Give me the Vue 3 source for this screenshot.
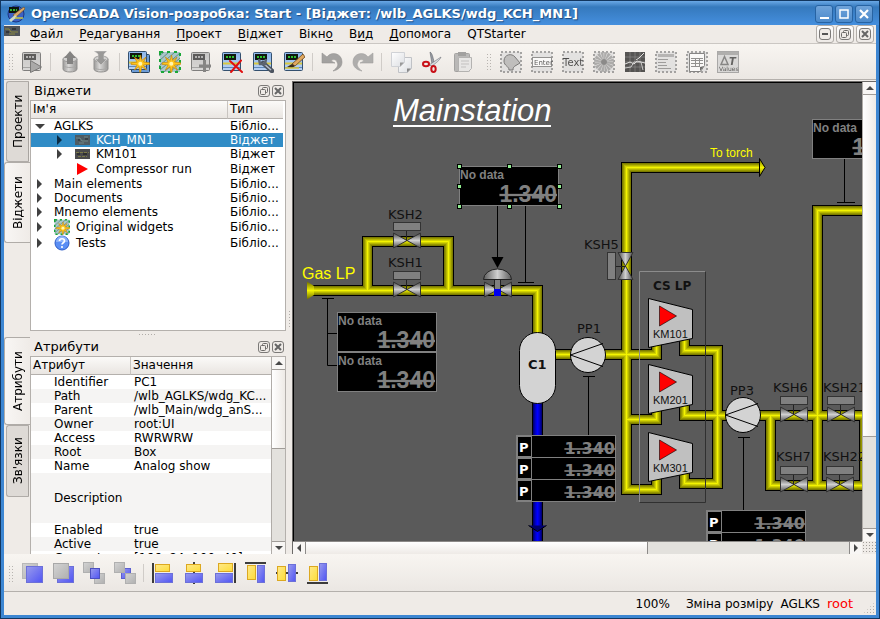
<script setup>
const menus = [
  ['', 'Ф', 'айл'],
  ['', 'Р', 'едагування'],
  ['', 'П', 'роект'],
  ['', 'В', 'іджет'],
  ['Вікн', 'о', ''],
  ['В', 'и', 'д'],
  ['', 'Д', 'опомога'],
  ['QTStarter', '', ''],
]

const mainTools = [
  { id: 'handle' },
  { id: 'run', label: 'Run', off: true },
  { id: 'sep' },
  { id: 'dbload', label: 'Load', off: true },
  { id: 'dbsave', label: 'Save', off: true },
  { id: 'sep' },
  { id: 'newlib', label: 'New library' },
  { id: 'newwdg', label: 'New widget' },
  { id: 'addwdg', label: 'Add widget', off: true },
  { id: 'delwdg', label: 'Delete' },
  { id: 'propwdg', label: 'Properties' },
  { id: 'editwdg', label: 'Edit' },
  { id: 'sep' },
  { id: 'undo', label: 'Undo', off: true },
  { id: 'redo', label: 'Redo', off: true },
  { id: 'sep' },
  { id: 'copy', label: 'Copy' },
  { id: 'cut', label: 'Cut' },
  { id: 'paste', label: 'Paste', off: true },
  { id: 'handle' },
  { id: 'elfig', label: 'Elementary figure', off: true },
  { id: 'form', label: 'Form element', off: true },
  { id: 'textel', label: 'Text', off: true },
  { id: 'media', label: 'Media', off: true },
  { id: 'diag', label: 'Diagram', off: true },
  { id: 'prot', label: 'Protocol', off: true },
  { id: 'doc', label: 'Document', off: true },
  { id: 'func', label: 'Values', off: true },
]

const bottomTools = [
  { id: 'handle' },
  { id: 'raise', label: 'Raise' },
  { id: 'lower', label: 'Lower' },
  { id: 'up', label: 'Up' },
  { id: 'down', label: 'Down' },
  { id: 'sep' },
  { id: 'aleft', label: 'Align left' },
  { id: 'avc', label: 'Align vertical center' },
  { id: 'aright', label: 'Align right' },
  { id: 'atop', label: 'Align top' },
  { id: 'ahc', label: 'Align horizontal center' },
  { id: 'abottom', label: 'Align bottom' },
]

const tree = [
  { name: 'AGLKS', type: 'Бібліо...', level: 0, arrow: 'open' },
  { name: 'KCH_MN1', type: 'Віджет', level: 1, arrow: 'shut', icon: 't-kch', selected: true },
  { name: 'KM101', type: 'Віджет', level: 1, arrow: 'shut', icon: 't-km' },
  { name: 'Compressor run', type: 'Віджет', level: 1, arrow: '', icon: 't-run', tall: true },
  { name: 'Main elements', type: 'Бібліо...', level: 0, arrow: 'shut' },
  { name: 'Documents', type: 'Бібліо...', level: 0, arrow: 'shut' },
  { name: 'Mnemo elements', type: 'Бібліо...', level: 0, arrow: 'shut' },
  { name: 'Original widgets', type: 'Бібліо...', level: 0, arrow: 'shut', icon: 'i-newwdg', tall: true },
  { name: 'Tests', type: 'Бібліо...', level: 0, arrow: 'shut', icon: 't-help', tall: true },
]

const attrs = [
  ['Identifier', 'PC1'],
  ['Path', '/wlb_AGLKS/wdg_KC...'],
  ['Parent', '/wlb_Main/wdg_anS...'],
  ['Owner', 'root:UI'],
  ['Access', 'RWRWRW'],
  ['Root', 'Box'],
  ['Name', 'Analog show'],
  ['Description', ''],
  ['Enabled', 'true'],
  ['Active', 'true'],
  ['Geometry', '[166, 84, 100, 40]'],
]

const gasPipes =
  'M312 290.5H537.5V336 M367.5 290.5V241.5H448.5V290.5 M550 354.5H656.5V338 ' +
  'M760 167.5H626.5V489.5H656.5V474 M626.5 419.5H656.5V404 ' +
  'M684.5 338V350.5H717.5V483.5H684.5V470 M684.5 402V415.5H870 ' +
  'M770.5 415.5V485.5H870 M870 210.5H817.5V485.5 M864.5 415.5V485.5'
const waterPipes = 'M537.5 400V560'
const gasLayers = [[11, '#000000'], [9, '#7c7c00'], [7, '#969600'], [5, '#b4b400'], [3, '#d2d200'], [1, '#f4f400']]
const waterLayers = [[11, '#000000'], [9, '#000078'], [7, '#0000a0'], [5, '#0000c8'], [3, '#0000e6'], [1, '#0000ff']]

const valves = [[407, 240.5], [407, 289.5], [794, 414.5], [794, 484.5], [841, 414.5], [840, 484.5]]
const labels = [
  ['KSH2', 388, 219], ['KSH1', 388, 267], ['KSH5', 584, 249], ['PP1', 577, 333], ['PP3', 730, 395],
  ['KSH6', 773, 392], ['KSH7', 776, 461], ['KSH21', 823, 392], ['KSH22', 823, 461],
]
const displays = [[459, 166], [337, 312], [337, 352], [812, 119]]
const handles = [[459, 166], [509, 166], [559, 166], [459, 186], [559, 186], [459, 206], [509, 206], [559, 206]]
const compressors = [['KM101', 298], ['KM201', 364], ['KM301', 432]]
const pumps = [[588, 355], [743, 415]]
const meters = [[516, 435], [516, 457], [516, 479], [706, 510], [706, 532]]
</script>

<template>
  <div class="window">
    <svg class="defs" width="0" height="0" aria-hidden="true">
      <defs>
        <linearGradient id="g-blue" x1="0" y1="0" x2="1" y2="1">
          <stop offset="0" stop-color="#9a9cec" /><stop offset="1" stop-color="#5054f4" />
        </linearGradient>
        <linearGradient id="g-gray" x1="0" y1="0" x2="1" y2="1">
          <stop offset="0" stop-color="#d4d4d4" /><stop offset="1" stop-color="#b0b0b0" />
        </linearGradient>
        <linearGradient id="g-yel" x1="0" y1="0" x2="1" y2="1">
          <stop offset="0" stop-color="#ffe98a" /><stop offset="1" stop-color="#fddc38" />
        </linearGradient>
        <linearGradient id="g-face" x1="0" y1="0" x2="0" y2="1">
          <stop offset="0" stop-color="#8db6ea" /><stop offset="1" stop-color="#b9d3f4" />
        </linearGradient>
        <linearGradient id="g-cyl" x1="0" y1="0" x2="1" y2="0">
          <stop offset="0" stop-color="#747474" /><stop offset=".4" stop-color="#d0d0d0" /><stop offset="1" stop-color="#6c6c6c" />
        </linearGradient>
        <linearGradient id="g-page" x1="0" y1="0" x2="1" y2="1">
          <stop offset="0" stop-color="#ffffff" /><stop offset="1" stop-color="#dcdee2" />
        </linearGradient>
        <symbol id="p-base" viewBox="0 0 22 22">
          <rect x="1.500" y="1.500" width="18" height="18" rx="1" fill="url(#g-face)" stroke="#34506e" />
          <rect x="3" y="3" width="12" height="6" fill="#101810" />
          <path d="M5 6h2M8 6h2M11 6h2" stroke="#2ec02e" stroke-width="2" />
          <path d="M2 12.500h17" stroke="#d8c840" stroke-width="2" />
          <path d="M2 16.500h17" stroke="#6088b8" />
        </symbol>
        <symbol id="p-star" viewBox="0 0 22 22">
          <path d="M12.500 4l1.200 5.400 4.300-3.200-2.500 4.800 6 .8v1.600l-6 .6 2.900 5-4.700-3.200-1 5.400h-1l-.8-5.400-4.500 3.200 2.700-5-6-.6v-1.600l6-.6-2.700-5 4.700 3.200z" fill="#ffc61c" stroke="#c88808" stroke-width=".7" />
          <circle cx="12.300" cy="12.800" r="2" fill="#fff6b0" />
        </symbol>
        <symbol id="p-frame" viewBox="0 0 22 22">
          <rect x="1" y="1" width="20" height="20" fill="#dcdcdc" stroke="#808080" stroke-width="2" stroke-dasharray="2 2" />
        </symbol>

        <symbol id="i-run" viewBox="0 0 22 22"><use href="#p-base" /><path d="M9.500 9.500l11 6.500-11 5.500z" fill="#8a8a8a" stroke="#444" /></symbol>
        <symbol id="i-dbload" viewBox="0 0 22 22">
          <path d="M4 8v10c0 4 14 4 14 0V8z" fill="url(#g-cyl)" stroke="#666" />
          <ellipse cx="11" cy="8" rx="7" ry="3" fill="#c0c0c0" stroke="#777" />
          <path d="M11 0l6 7h-3v6H8V7H5z" fill="#505050" /><path d="M5 15c2 2 10 2 12 0" stroke="#888" fill="none" />
        </symbol>
        <symbol id="i-dbsave" viewBox="0 0 22 22">
          <path d="M4 8v10c0 4 14 4 14 0V8z" fill="url(#g-cyl)" stroke="#666" />
          <ellipse cx="11" cy="8" rx="7" ry="3" fill="#c0c0c0" stroke="#777" />
          <path d="M4 0h13l-3 3v5h3l-6 6-6-6h3V3z" fill="#707070" stroke="#ccc" stroke-width=".6" /><path d="M5 17c2 2 10 2 12 0" stroke="#888" fill="none" />
        </symbol>
        <symbol id="i-newlib" viewBox="0 0 22 22">
          <rect x="3.500" y="3.500" width="18" height="18" rx="1" fill="#6c9cd8" stroke="#24405e" />
          <use href="#p-base" x="-1" y="-1" width="22" height="22" /><use href="#p-star" />
        </symbol>
        <symbol id="i-newwdg" viewBox="0 0 22 22">
          <rect x="1" y="1" width="20" height="20" fill="#a8c8c8" />
          <path d="M0 5l5-4M0 10L10 1M0 15L16 1M1 19L21 2M5 21L21 7M11 21l10-9M16 21l5-4" stroke="#587878" stroke-width=".8" />
          <rect x="1" y="1" width="20" height="20" fill="none" stroke="#18a838" stroke-width="2" stroke-dasharray="3 4" />
          <use href="#p-star" />
        </symbol>
        <symbol id="i-addwdg" viewBox="0 0 22 22"><use href="#p-base" /><path d="M14.500 9v12M9 15h12" stroke="#555" stroke-width="3" /></symbol>
        <symbol id="i-delwdg" viewBox="0 0 22 22"><use href="#p-base" /><path d="M9 10l12 11M20 9.500L10 21" stroke="#e01010" stroke-width="2" stroke-linecap="round" /></symbol>
        <symbol id="i-propwdg" viewBox="0 0 22 22"><use href="#p-base" /><path d="M11 12l9 8" stroke="#4c5460" stroke-width="4.500" stroke-linecap="round" /><path d="M11 12l8 7" stroke="#b8c0cc" stroke-width="1.500" /><path d="M7 8l1 5 5 0 1-5" stroke="#5c6470" stroke-width="2.500" fill="none" /></symbol>
        <symbol id="i-editwdg" viewBox="0 0 22 22"><use href="#p-base" /><path d="M9 13L20 3l2 3-10 9z" fill="#e0a860" stroke="#6a4418" stroke-width=".8" /><path d="M4 16l5-3 3 2-3 2z" fill="#3a2a1a" /><path d="M2 17h14" stroke="#d8c840" stroke-width="1.500" /></symbol>
        <symbol id="i-undo" viewBox="0 0 22 22"><path d="M6 6C10 0 21 2 21 11c0 5-4 8-9 9 4-3 6-6 4-9-1-3-4-3-6-1l4 2H1V2z" fill="#7e7e7e" stroke="#686868" stroke-width=".6" /></symbol>
        <symbol id="i-redo" viewBox="0 0 22 22"><path d="M16 6C12 0 1 2 1 11c0 5 4 8 9 9-4-3-6-6-4-9 1-3 4-3 6-1l-4 2h13V2z" fill="#909090" stroke="#7c7c7c" stroke-width=".6" /></symbol>
        <symbol id="i-copy" viewBox="0 0 22 22">
          <path d="M8.500 6.500h13v11l-4 4h-9z" fill="url(#g-page)" stroke="#c0c2c6" /><path d="M21 17.500h-4v4z" fill="#888" />
          <path d="M1.500 1.500h13v10l-4 4h-9z" fill="url(#g-page)" stroke="#d0d2d6" /><path d="M14 11.500h-4v4z" fill="#999" />
        </symbol>
        <symbol id="i-cut" viewBox="0 0 22 22">
          <path d="M11 13L9 1c2 1 3 5 4 10z" fill="#9a9ea6" stroke="#5e6268" stroke-width=".6" />
          <path d="M8 14l12-8c-1 3-5 6-9 9z" fill="#d8dade" stroke="#6e7278" stroke-width=".6" />
          <ellipse cx="5" cy="13" rx="3" ry="2.200" fill="none" stroke="#c81018" stroke-width="2" />
          <ellipse cx="12.500" cy="18" rx="2.200" ry="3" fill="none" stroke="#c81018" stroke-width="2" />
        </symbol>
        <symbol id="i-paste" viewBox="0 0 22 22">
          <rect x="2.500" y="2.500" width="15" height="18" rx="1" fill="#a0a0a0" stroke="#808080" /><rect x="6" y="1" width="8" height="4" fill="#7c7c7c" />
          <path d="M6.500 6.500h13v11l-3 3h-10z" fill="#e4e4e4" stroke="#989898" /><path d="M9 10h8M9 13h8M9 16h5" stroke="#adadad" />
        </symbol>
        <symbol id="i-elfig" viewBox="0 0 22 22"><use href="#p-frame" /><path d="M4 10c0-7 8-8 11-4l5 6-5 3c-1 1-2 1-2 4H9c0-4-5-4-5-9z" fill="#a8a8a8" stroke="#444" /></symbol>
        <symbol id="i-form" viewBox="0 0 22 22"><use href="#p-frame" /><rect x="1.500" y="6.500" width="19" height="9" fill="#fff" stroke="#666" /><text x="3" y="14" font-size="7" fill="#111">Enter</text></symbol>
        <symbol id="i-textel" viewBox="0 0 22 22"><use href="#p-frame" /><text x="1" y="15" font-size="10" fill="#000">Text</text></symbol>
        <symbol id="i-media" viewBox="0 0 22 22"><use href="#p-frame" /><circle cx="11" cy="11" r="6.500" fill="none" stroke="#8c8c8c" stroke-width="7" stroke-dasharray="2 .5" /><circle cx="11" cy="11" r="3" fill="#5c5c5c" /></symbol>
        <symbol id="i-diag" viewBox="0 0 22 22"><rect x="1" y="1" width="20" height="20" fill="#0c0c0c" /><path d="M6 1v20M11 1v20M16 1v20M1 6h20M1 11h20M1 16h20" stroke="#666" stroke-width=".6" /><path d="M1 13l5-2 4 2 3-3 8 2M12 9l3-2 5-5" fill="none" stroke="#ddd" /><path d="M1 17l6-1 3-5 7 0 2 8" fill="none" stroke="#bbb" /></symbol>
        <symbol id="i-prot" viewBox="0 0 22 22"><use href="#p-frame" /><path d="M3 4.500h16" stroke="#999" stroke-width="3" /><path d="M3 8.500h10M3 11.500h8M3 14.500h9M3 17.500h13" stroke="#777" stroke-width="1" /></symbol>
        <symbol id="i-doc" viewBox="0 0 22 22"><use href="#p-frame" /><path d="M3.500 2.500h15v12l-4 6h-11z" fill="#fff" stroke="#555" /><path d="M5 9.500h12M5 12.500h12M5 15.500h9M9.500 7v9M13.500 7v9M5 7.500h12" stroke="#666" /><path d="M18 15l-4 1v4z" fill="#333" /></symbol>
        <symbol id="i-func" viewBox="0 0 22 22"><rect x=".5" y=".5" width="21" height="21" fill="#cfcfcf" stroke="#888" /><rect x="1" y="1" width="20" height="3" fill="#909090" /><path d="M4 13.500l3.500-8 3.500 8z" fill="none" stroke="#555" stroke-width="1.500" /><text x="12" y="14" font-size="10" font-weight="bold" font-style="italic" fill="#222">T</text><text x="2" y="20" font-size="6" fill="#111">Values</text></symbol>

        <symbol id="i-raise" viewBox="0 0 22 22"><rect x="1.500" y="1.500" width="15" height="15" fill="url(#g-gray)" stroke="#b8b8b8" /><rect x="5.500" y="4.500" width="16" height="16" fill="url(#g-blue)" stroke="#6c70d8" /></symbol>
        <symbol id="i-lower" viewBox="0 0 22 22"><rect x="5.500" y="4.500" width="16" height="16" fill="url(#g-blue)" stroke="#6c70d8" /><rect x="1.500" y="1.500" width="15" height="15" fill="url(#g-gray)" stroke="#a8a8a8" /></symbol>
        <symbol id="i-up" viewBox="0 0 22 22"><rect x=".5" y=".5" width="10" height="10" fill="url(#g-gray)" stroke="#b0b0b0" /><rect x="11.500" y="11.500" width="10" height="10" fill="url(#g-gray)" stroke="#b0b0b0" /><rect x="7.500" y="6.500" width="9" height="10" fill="url(#g-blue)" stroke="#4c50c0" /></symbol>
        <symbol id="i-down" viewBox="0 0 22 22"><rect x="7.500" y="6.500" width="9" height="10" fill="url(#g-blue)" stroke="#5c60d0" /><rect x=".5" y=".5" width="10" height="10" fill="url(#g-gray)" stroke="#b0b0b0" /><rect x="11.500" y="11.500" width="10" height="10" fill="url(#g-gray)" stroke="#b0b0b0" /></symbol>
        <symbol id="i-aleft" viewBox="0 0 22 22"><path d="M1 1v20" stroke="#000" stroke-width="1.500" /><rect x="3.500" y="2.500" width="14" height="7" fill="url(#g-yel)" stroke="#dca820" /><rect x="3.500" y="11.500" width="17" height="9" fill="url(#g-blue)" stroke="#6c70d8" /></symbol>
        <symbol id="i-avc" viewBox="0 0 22 22"><path d="M11 0v22" stroke="#000" stroke-width="1.500" /><rect x="3.500" y="2.500" width="14" height="7" fill="url(#g-yel)" stroke="#dca820" /><rect x="2.500" y="11.500" width="17" height="9" fill="url(#g-blue)" stroke="#6c70d8" /></symbol>
        <symbol id="i-aright" viewBox="0 0 22 22"><path d="M21 1v20" stroke="#000" stroke-width="1.500" /><rect x="4.500" y="1.500" width="14" height="8" fill="url(#g-yel)" stroke="#dca820" /><rect x="1.500" y="11.500" width="17" height="9" fill="url(#g-blue)" stroke="#6c70d8" /></symbol>
        <symbol id="i-atop" viewBox="0 0 22 22"><path d="M0 1h21" stroke="#000" stroke-width="1.500" /><rect x="2.500" y="3.500" width="8" height="14" fill="url(#g-yel)" stroke="#dca820" /><rect x="12.500" y="3.500" width="7" height="17" fill="url(#g-blue)" stroke="#6c70d8" /></symbol>
        <symbol id="i-ahc" viewBox="0 0 22 22"><path d="M0 11h22" stroke="#000" stroke-width="1.500" /><rect x="1.500" y="4.500" width="8" height="14" fill="url(#g-yel)" stroke="#dca820" /><rect x="12.500" y="2.500" width="7" height="17" fill="url(#g-blue)" stroke="#6c70d8" /></symbol>
        <symbol id="i-abottom" viewBox="0 0 22 22"><path d="M0 21h21" stroke="#000" stroke-width="1.500" /><rect x="2.500" y="4.500" width="8" height="14" fill="url(#g-yel)" stroke="#dca820" /><rect x="12.500" y="1.500" width="7" height="17" fill="url(#g-blue)" stroke="#6c70d8" /></symbol>

        <symbol id="t-kch" viewBox="0 0 16 16"><rect y="3" width="15" height="10" fill="#4e5c64" /><path d="M1 6h4l2 3h6M4 11h5M9 5h4" stroke="#86a6a0" stroke-width=".6" fill="none" /><path d="M3 8h2M10 7h3" stroke="#20282c" /></symbol>
        <symbol id="t-km" viewBox="0 0 16 16"><rect y="3" width="15" height="10" fill="#4a4a4c" /><path d="M1 6.500h13M3 10.500h9" stroke="#7c7a48" stroke-dasharray="3 1" /><path d="M2 8h3M8 8h4" stroke="#151515" /></symbol>
        <symbol id="t-run" viewBox="0 0 16 16"><path d="M2 2l11 6-11 6z" fill="#f00" /></symbol>
        <symbol id="t-help" viewBox="0 0 16 16"><circle cx="8" cy="8" r="7" fill="#5a8ef4" stroke="#2c5cc8" /><path d="M2 7a6 6 0 0 1 12 0z" fill="#8cb2fa" /><path d="M5.500 6c0-3 5-3 5 0 0 1.700-2.500 1.700-2.500 3.500" fill="none" stroke="#fff" stroke-width="1.700" /><circle cx="8" cy="12" r="1.100" fill="#fff" /></symbol>
        <symbol id="s-float" viewBox="0 0 12 12"><rect x=".5" y=".5" width="11" height="11" rx="2.500" fill="#efebe7" stroke="#7c7a78" /><rect x="4.500" y="2.500" width="5" height="5" rx="1" fill="none" stroke="#6c6a68" /><rect x="2.500" y="4.500" width="5" height="5" rx="1" fill="#efebe7" stroke="#6c6a68" /></symbol>
        <symbol id="s-close" viewBox="0 0 12 12"><rect x=".5" y=".5" width="11" height="11" rx="2.500" fill="#efebe7" stroke="#7c7a78" /><path d="M3 3l6 6M9 3L3 9" stroke="#666" stroke-width="2" /></symbol>
        <symbol id="s-min" viewBox="0 0 12 12"><rect x=".5" y=".5" width="11" height="11" rx="2.500" fill="#efebe7" stroke="#7c7a78" /><path d="M3 6h6" stroke="#555" stroke-width="2" /></symbol>
      </defs>
    </svg>

    <header class="titlebar">
      <svg class="logo" viewBox="0 0 18 18" aria-hidden="true">
        <circle cx="9" cy="9" r="8" fill="#3c62c4" stroke="#1c3480" />
        <rect x="2" y="2" width="10" height="6" fill="#0c140c" /><path d="M3 5h7" stroke="#30b030" stroke-width="2" stroke-dasharray="2 1" />
        <path d="M6 10l8-6 3-2 1 2-9 8z" fill="#d8a868" stroke="#6c4820" stroke-width=".6" />
        <path d="M2 15l6-5 2 2-6 5z" fill="#ccd8c4" /><path d="M8 13h8" stroke="#c8c840" stroke-width="1.500" />
      </svg>
      <h1>OpenSCADA Vision-розробка: Start - [Віджет: /wlb_AGLKS/wdg_KCH_MN1]</h1>
      <div class="winbtns">
        <button aria-label="Minimize"><svg viewBox="0 0 16 16"><path d="M4 12h9" stroke="#fff" stroke-width="2" /></svg></button>
        <button aria-label="Maximize"><svg viewBox="0 0 16 16"><rect x="4" y="4" width="8" height="8" fill="none" stroke="#fff" stroke-width="1.500" /></svg></button>
        <button aria-label="Close"><svg viewBox="0 0 16 16"><path d="M4 4l8 8M12 4l-8 8" stroke="#fff" stroke-width="2.200" /></svg></button>
      </div>
    </header>

    <div class="inner">
      <nav class="menubar">
        <svg class="menuicon" viewBox="0 0 16 10" aria-hidden="true"><rect width="16" height="10" fill="#50545a" /><path d="M1 3h4l2 3h7M5 8h6" stroke="#8c8a40" fill="none" /><path d="M8 3h4M2 6h3" stroke="#16181a" /></svg>
        <button v-for="m in menus" :key="m.join('')" class="menu">{{ m[0] }}<u>{{ m[1] }}</u>{{ m[2] }}</button>
        <div class="mdi">
          <button aria-label="Minimize document"><svg><use href="#s-min" /></svg></button>
          <button aria-label="Restore document"><svg><use href="#s-float" /></svg></button>
          <button aria-label="Close document"><svg><use href="#s-close" /></svg></button>
        </div>
      </nav>

      <div class="toolbar" role="toolbar">
        <template v-for="(t, i) in mainTools" :key="i">
          <i v-if="t.id === 'handle'" class="handle"></i>
          <i v-else-if="t.id === 'sep'" class="sep"></i>
          <button v-else class="tool" :disabled="t.off" :aria-label="t.label"><svg><use :href="'#i-' + t.id" /></svg></button>
        </template>
      </div>

      <main class="work">
        <div class="docks">
          <section class="dock dock-top">
            <div class="tabs" role="tablist">
              <button role="tab" class="tab">Проекти</button>
              <button role="tab" class="tab active" aria-selected="true">Віджети</button>
            </div>
            <div class="panel">
              <div class="dockhead"><h2>Віджети</h2>
                <button aria-label="Float"><svg><use href="#s-float" /></svg></button>
                <button aria-label="Close"><svg><use href="#s-close" /></svg></button>
              </div>
              <div class="view treeview">
                <table class="tree">
                  <colgroup><col /><col class="c-type" /></colgroup>
                  <thead><tr><th>Ім'я</th><th>Тип</th></tr></thead>
                  <tbody>
                    <tr v-for="r in tree" :key="r.name" :class="{ selected: r.selected, tall: r.tall }">
                      <td>
                        <div class="node" :class="{ child: r.level }">
                          <span class="arrow"><svg v-if="r.arrow" viewBox="0 0 10 10"><path :d="r.arrow === 'open' ? 'M0 3h10l-5 5z' : 'M2 0v10l5-5z'" /></svg></span>
                          <svg v-if="r.icon" class="nodeicon"><use :href="'#' + r.icon" /></svg>{{ r.name }}
                        </div>
                      </td>
                      <td>{{ r.type }}</td>
                    </tr>
                  </tbody>
                </table>
              </div>
            </div>
          </section>
          <div class="hsplit"><i></i></div>
          <section class="dock dock-bottom">
            <div class="tabs" role="tablist">
              <button role="tab" class="tab active" aria-selected="true">Атрибути</button>
              <button role="tab" class="tab">Зв'язки</button>
            </div>
            <div class="panel">
              <div class="dockhead"><h2>Атрибути</h2>
                <button aria-label="Float"><svg><use href="#s-float" /></svg></button>
                <button aria-label="Close"><svg><use href="#s-close" /></svg></button>
              </div>
              <div class="view split">
                <div class="clip">
                  <table class="attrs">
                    <colgroup><col class="c-attr" /><col /></colgroup>
                    <thead><tr><th>Атрибут</th><th>Значення</th></tr></thead>
                    <tbody>
                      <tr v-for="a in attrs" :key="a[0]" :class="{ big: a[0] === 'Description' }">
                        <td>{{ a[0] }}</td><td>{{ a[1] }}</td>
                      </tr>
                    </tbody>
                  </table>
                </div>
                <div class="scroll vertical">
                  <button aria-label="Scroll up"><svg viewBox="0 0 8 8"><path d="M0 6h8L4 2z" /></svg></button>
                  <div class="track"><div class="thumb t46"></div></div>
                  <button aria-label="Scroll down"><svg viewBox="0 0 8 8"><path d="M0 2h8L4 6z" /></svg></button>
                </div>
              </div>
            </div>
          </section>
        </div>
        <div class="vsplit"><i></i></div>

        <div class="mdiview">
          <div class="canvas">
            <svg class="scheme" width="620" height="500" viewBox="294 83 620 500">
              <defs>
                <linearGradient id="v-metal" x1="0" y1="0" x2="0" y2="1">
                  <stop offset="0" stop-color="#484848" /><stop offset=".5" stop-color="#d0d0d0" /><stop offset="1" stop-color="#484848" />
                </linearGradient>
                <linearGradient id="v-dome" x1="0" y1="0" x2="1" y2="0">
                  <stop offset="0" stop-color="#5c5c5c" /><stop offset=".5" stop-color="#d0d0d0" /><stop offset="1" stop-color="#5c5c5c" />
                </linearGradient>
                <linearGradient id="v-gas" x1="0" y1="0" x2="0" y2="1">
                  <stop offset="0" stop-color="#6c6c00" /><stop offset=".5" stop-color="#f4f400" /><stop offset="1" stop-color="#6c6c00" />
                </linearGradient>
                <g id="valve-body" stroke="#333">
                  <path d="M-13.500-7.500V7.500L0 0zM13.500-7.500V7.500L0 0z" fill="url(#v-metal)" />
                </g>
                <g id="valve">
                  <use href="#valve-body" />
                  <path d="M-.5-10V0" stroke="#222" />
                  <rect x="-13.500" y="-18" width="27" height="8" fill="#808080" stroke="#333" />
                </g>
              </defs>

              <path v-for="l in gasLayers" :key="l[0]" :d="gasPipes" fill="none" :stroke="l[1]" :stroke-width="l[0]" />
              <path v-for="l in waterLayers" :key="l[0]" :d="waterPipes" fill="none" :stroke="l[1]" :stroke-width="l[0]" />
              <path d="M307 281.500l7 4.500v9l-7 4.500z" fill="url(#v-gas)" />
              <path d="M759.500 158.500l5.500 9-5.500 9z" fill="url(#v-gas)" stroke="#000" />
              <path d="M528.500 525.500l9 6 9-6" fill="#000070" stroke="#000" />

              <g fill="none" stroke="#000">
                <path d="M322 298.500h12M327.500 298.500V365.500H337M327.500 333.500H337" />
                <path d="M497.500 206V258M525.500 206V282.500M518 282.500h16" />
                <path d="M844.500 159V202.500M837 202.500h18" />
                <path d="M588.500 376.500V436M583 376.500h12M743.500 437.500V511M738 437.500h12" />
              </g>
              <path d="M491.500 257h12l-6 11z" />

              <path d="M639.500 502.500V271.500H705.500" fill="none" stroke="#8c8c8c" />
              <path d="M639.500 502.500H705.500V271.500" fill="none" stroke="#303030" />
              <text x="653" y="290" class="dj bold s12">CS LP</text>

              <use v-for="v in valves" :key="v.join()" href="#valve" :x="v[0]" :y="v[1]" />
              <use href="#valve" transform="translate(625.500 266) rotate(-90)" />
              <use href="#valve-body" x="498" y="289.500" />
              <rect x="494.500" y="279.500" width="6" height="12" fill="#808080" stroke="#222" />
              <rect x="494" y="289" width="7" height="7" fill="#0000f0" />
              <path d="M483.500 279.500a14 10.500 0 0 1 28 0z" fill="url(#v-dome)" stroke="#222" />

              <rect x="519.500" y="332.500" width="36" height="71" rx="18" fill="#d3d3d3" stroke="#000" />
              <text x="528" y="369" class="dj bold s13">C1</text>

              <g v-for="p in pumps" :key="p[0]" :transform="`translate(${p[0]} ${p[1]})`" stroke="#000">
                <circle r="17.500" fill="#d3d3d3" />
                <path d="M15-11.500L-17.500 0 15 11.500" fill="none" />
              </g>

              <g v-for="c in compressors" :key="c[0]" :transform="`translate(648 ${c[1]})`">
                <path d="M.5.500L44.500 11.500V40.500L.5 49.500z" fill="#c0c0c0" stroke="#000" />
                <path d="M11.500 8l17 10-17 10z" fill="#f00" stroke="#000" stroke-width=".6" />
                <text x="5" y="40" class="lib s11">{{ c[0] }}</text>
              </g>

              <g v-for="d in displays" :key="d.join()" :transform="`translate(${d[0]} ${d[1]})`">
                <rect x=".5" y=".5" width="99" height="39" fill="#000" stroke="#808080" />
                <text x="1" y="13" class="lib bold s12 gray">No data</text>
                <text x="98" y="36" class="lib bold s23 gray strike">1.340</text>
              </g>
              <rect v-for="h in handles" :key="h.join()" :x="h[0] - 1.5" :y="h[1] - 1.5" width="4" height="4" class="grip" />

              <g v-for="m in meters" :key="m.join()" :transform="`translate(${m[0]} ${m[1]})`">
                <rect width="100" height="23" fill="#808080" />
                <rect x="2" y="2" width="13" height="19" fill="#000" />
                <rect x="16" y="1" width="83" height="21" fill="#000" />
                <text x="3" y="17" class="dj bold s13 white">P</text>
                <text x="99" y="19" class="dj bold s16 gray strike">1.340</text>
              </g>

              <text v-for="l in labels" :key="l[0]" :x="l[1]" :y="l[2]" class="dj s13">{{ l[0] }}</text>
              <text x="302" y="279" class="lib s16 yellow">Gas LP</text>
              <text x="710" y="157" class="lib s12 yellow">To torch</text>
              <text x="393" y="121" class="lib head">Mainstation</text>
              <path d="M393 126h158" stroke="#fff" stroke-width="2" />
            </svg>
          </div>
          <div class="scroll vertical">
            <button aria-label="Scroll up"><svg viewBox="0 0 8 8"><path d="M0 6h8L4 2z" /></svg></button>
            <div class="track"><div class="thumb t79"></div></div>
            <button aria-label="Scroll down"><svg viewBox="0 0 8 8"><path d="M0 2h8L4 6z" /></svg></button>
          </div>
          <div class="scroll horizontal">
            <button aria-label="Scroll left"><svg viewBox="0 0 8 8"><path d="M6 0v8L2 4z" /></svg></button>
            <div class="track"><div class="thumb t63"></div></div>
            <button aria-label="Scroll right"><svg viewBox="0 0 8 8"><path d="M2 0v8l4-4z" /></svg></button>
          </div>
          <div class="corner"></div>
        </div>
      </main>

      <div class="toolbar lower" role="toolbar">
        <template v-for="(t, i) in bottomTools" :key="i">
          <i v-if="t.id === 'handle'" class="handle"></i>
          <i v-else-if="t.id === 'sep'" class="sep"></i>
          <button v-else class="tool" :aria-label="t.label"><svg><use :href="'#i-' + t.id" /></svg></button>
        </template>
      </div>

      <footer class="status">
        <span class="zoom">100%</span>
        <span>Зміна розміру</span>
        <span>AGLKS</span>
        <span class="user">root</span>
        <i class="sizegrip"></i>
      </footer>
    </div>
  </div>
</template>

<style>
body {
  margin: 0;
  background: #efebe7;
}
</style>

<style scoped>
.window {
  box-sizing: border-box;
  height: 100vh;
  display: flex;
  flex-direction: column;
  padding: 0 3px 3px;
  border: 1px solid #12365f;
  border-top: 0;
  background: #3d86d2;
  font: 12px/14px "DejaVu Sans", sans-serif;
  color: #000;
  overflow: hidden;
}
.defs { position: absolute; }
button {
  font: inherit;
  color: inherit;
  border: 0;
  padding: 0;
  margin: 0;
  background: none;
}
svg { display: block; flex: none; }
h1, h2 { margin: 0; font-size: inherit; font-weight: normal; }

.titlebar {
  display: flex;
  align-items: center;
  height: 25px;
  flex: none;
  margin: 0 -3px;
  padding: 2px 6px 0 6px;
  box-sizing: border-box;
  background: linear-gradient(#12365f 0, #12365f 1px, #6aa8e6 1px, #3579bd 7px, #458fde 100%);
}
.logo { width: 18px; height: 18px; margin-right: 6px; }
.titlebar h1 {
  flex: 1;
  min-width: 0;
  white-space: nowrap;
  overflow: hidden;
  font-weight: bold;
  font-size: 13px;
  line-height: 20px;
  color: #fff;
  text-shadow: 1px 1px 1px #1b477c;
}
.winbtns { display: flex; gap: 2px; }
.winbtns button {
  width: 18px;
  height: 18px;
  box-sizing: border-box;
  border: 1px solid #2763a3;
  border-radius: 3px;
  background: linear-gradient(#6fa3da, #4c8acb);
}
.winbtns svg { width: 16px; height: 16px; }

.inner {
  flex: 1;
  min-height: 0;
  display: flex;
  flex-direction: column;
  background: #efebe7;
}
.menubar {
  display: flex;
  align-items: center;
  height: 18px;
  flex: none;
  border-bottom: 1px solid #cbc7c3;
}
.menuicon { width: 16px; height: 10px; margin: 0 2px 6px 0; }
.menu { padding: 0 8px; white-space: nowrap; }
.menu u { text-underline-offset: 2px; }
.mdi { display: flex; gap: 2px; margin-left: auto; padding-right: 2px; }
.mdi button {
  box-sizing: border-box;
  width: 18px;
  height: 18px;
  padding: 2px;
  border: 1px solid #b0aca8;
  border-radius: 3px;
  background: linear-gradient(#fff, #eeeae6);
}
.mdi svg, .dockhead svg { width: 12px; height: 12px; }

.toolbar {
  display: flex;
  align-items: center;
  height: 35px;
  flex: none;
  background: linear-gradient(#f8f5f1, #ebe7e3);
  border-bottom: 1px solid #b4b0ac;
}
.tool { width: 31px; height: 31px; display: grid; place-items: center; }
.tool svg { width: 22px; height: 22px; }
.tool:disabled svg { filter: grayscale(1); opacity: .68; }
.sep {
  width: 1px;
  height: 18px;
  margin: 0 3px;
  background: #d0ccc8;
}
.handle {
  width: 5px;
  height: 17px;
  margin: 0 3px 0 4px;
  background: radial-gradient(circle, #b8b4b0 1px, transparent 1px) 0 0 / 3px 3px;
}
.tool + .handle { margin: 0 4px 0 8px; }

.work { flex: 1; min-height: 0; display: flex; padding-top: 1px; }
.docks { width: 282px; flex: none; display: flex; flex-direction: column; }
.dock { display: flex; min-height: 0; }
.dock-top { flex: 250 1 0; }
.dock-bottom { flex: 218 1 0; }
.tabs { width: 26px; flex: none; }
.tab {
  display: flex;
  align-items: center;
  justify-content: center;
  box-sizing: border-box;
  width: 23px;
  height: 72px;
  margin-left: 2px;
  writing-mode: vertical-rl;
  transform: rotate(180deg);
  border: 1px solid #b0aca8;
  border-left-color: #a8a4a0;
  border-radius: 0 3px 3px 0;
  background: #dedad6;
}
.dock-top .tab { height: 81px; }
.tab.active {
  width: 26px;
  margin-left: 0;
  border-left: 0;
  background: linear-gradient(90deg, #efebe7, #f8f6f4);
}
.dock-bottom .tab.active { height: 88px; }
.panel { flex: 1; min-width: 0; display: flex; flex-direction: column; }
.dockhead {
  display: flex;
  align-items: center;
  gap: 2px;
  height: 19px;
  flex: none;
  padding: 0 2px 0 4px;
}
.dockhead h2 { flex: 1; font-size: 13px; }
.view {
  flex: 1;
  min-height: 0;
  overflow: hidden;
  background: #fff;
  border: 1px solid #b4b0ac;
}
.treeview { padding-right: 2px; }
.split { display: flex; }
.clip { flex: 1; min-width: 0; overflow: hidden; }
table { width: 100%; border-collapse: separate; border-spacing: 0; table-layout: fixed; }
.c-type { width: 56px; }
.c-attr { width: 99px; }
th {
  height: 17px;
  padding: 0 2px;
  text-align: left;
  font-weight: normal;
  line-height: 17px;
  background: linear-gradient(#fbfaf8, #e9e5e1);
  border-bottom: 1px solid #b4b0ac;
}
th + th { border-left: 1px solid #c8c4c0; }
td { height: 14px; padding: 0; white-space: nowrap; overflow: hidden; }
.tree td + td { padding-left: 3px; }
.tall td { height: 16px; }
.selected td { background: #308cc6; color: #fff; }
.node { display: flex; align-items: center; padding-left: 4px; }
.node.child { padding-left: 24px; }
.arrow { width: 19px; flex: none; }
.arrow svg { width: 10px; height: 10px; fill: #404040; }
.selected .arrow svg { fill: #0c2c44; }
.nodeicon { width: 16px; height: 16px; margin: -1px 6px -1px 0; }
.child .nodeicon { margin-left: -4px; margin-right: 5px; }
.child .arrow { width: 24px; }
.attrs tr:nth-child(even) td { background: #f5f4f3; }
.attrs td { padding-left: 23px; }
.attrs td + td { padding-left: 4px; }
.attrs .big td { height: 50px; }
.hsplit { height: 6px; flex: none; display: grid; place-items: center; padding-left: 2px; }
.hsplit i { width: 17px; height: 3px; background: radial-gradient(circle, #b0aca8 1px, transparent 1px) 0 0 / 3px 3px; }
.vsplit { width: 6px; flex: none; display: grid; place-items: center; }
.vsplit i { width: 3px; height: 17px; background: radial-gradient(circle, #b0aca8 1px, transparent 1px) 0 0 / 3px 3px; }

.mdiview {
  flex: 1;
  min-width: 0;
  display: grid;
  grid-template: minmax(0, 1fr) 14px / minmax(0, 1fr) 14px;
  border-top: 1px solid #6c6a68;
  border-left: 1px solid #6c6a68;
}
.canvas {
  overflow: hidden;
  background: #5a5a5a;
  border-top: 1px solid #000;
  border-left: 1px solid #000;
}
.scroll { display: flex; background: #e3e1dd; }
.scroll.vertical { width: 14px; flex: none; flex-direction: column; box-sizing: border-box; border-left: 1px solid #b0aca8; }
.scroll.horizontal { box-sizing: border-box; border-top: 1px solid #8c8a88; border-bottom: 1px solid #8c8a88; }
.scroll button { width: 13px; height: 13px; flex: none; display: grid; place-items: center; background: #f8f6f4; }
.scroll button svg { width: 8px; height: 8px; fill: #484848; }
.vertical button:first-child { border-bottom: 1px solid #a09c98; }
.vertical button:last-child { border-top: 1px solid #a09c98; }
.horizontal button { height: 12px; }
.horizontal button:first-child { border-right: 1px solid #8c8a88; }
.horizontal button:last-child { border-left: 1px solid #8c8a88; }
.track { flex: 1; min-width: 0; min-height: 0; }
.thumb { box-sizing: border-box; }
.vertical .thumb { width: 100%; border-bottom: 1px solid #a09c98; background: linear-gradient(90deg, #fff, #eeeae6); }
.horizontal .thumb { height: 100%; border-right: 1px solid #8c8a88; background: linear-gradient(#fff, #eeeae6); }
.t46 { height: 46%; }
.t79 { height: 79%; }
.t63 { width: 63%; }
.corner { background: radial-gradient(circle, #a09c98 1px, transparent 1px) 0 0 / 3px 3px; }

.scheme { font-family: "DejaVu Sans", sans-serif; }
.dj { font-family: "DejaVu Sans", sans-serif; fill: #111; }
.lib { font-family: "Liberation Sans", Arial, sans-serif; fill: #111; }
.bold { font-weight: bold; }
.s11 { font-size: 11px; }
.s12 { font-size: 12px; }
.s13 { font-size: 13px; }
.s16 { font-size: 16px; }
.s23 { font-size: 23px; }
.gray { fill: #808080; }
.white { fill: #fff; }
.yellow { fill: #ffff00; }
.strike { text-anchor: end; text-decoration: line-through; text-decoration-thickness: 2px; }
.head { font-size: 31px; font-style: italic; fill: #fff; }
.grip { fill: #90ee90; stroke: #000; }

.lower { height: 36px; padding-top: 1px; box-sizing: content-box; margin-top: -1px; }
.status {
  display: flex;
  align-items: center;
  justify-content: flex-end;
  gap: 7px;
  height: 23px;
  flex: none;
  white-space: nowrap;
}
.zoom { margin-right: 9px; }
.user { color: #f00; font-size: 13px; }
.sizegrip {
  align-self: flex-end;
  width: 12px;
  height: 12px;
  margin: 0 1px 1px 3px;
  background: radial-gradient(circle, #b0aca8 1px, transparent 1px) 0 0 / 3px 3px;
  clip-path: polygon(100% 0, 100% 100%, 0 100%);
}
</style>
